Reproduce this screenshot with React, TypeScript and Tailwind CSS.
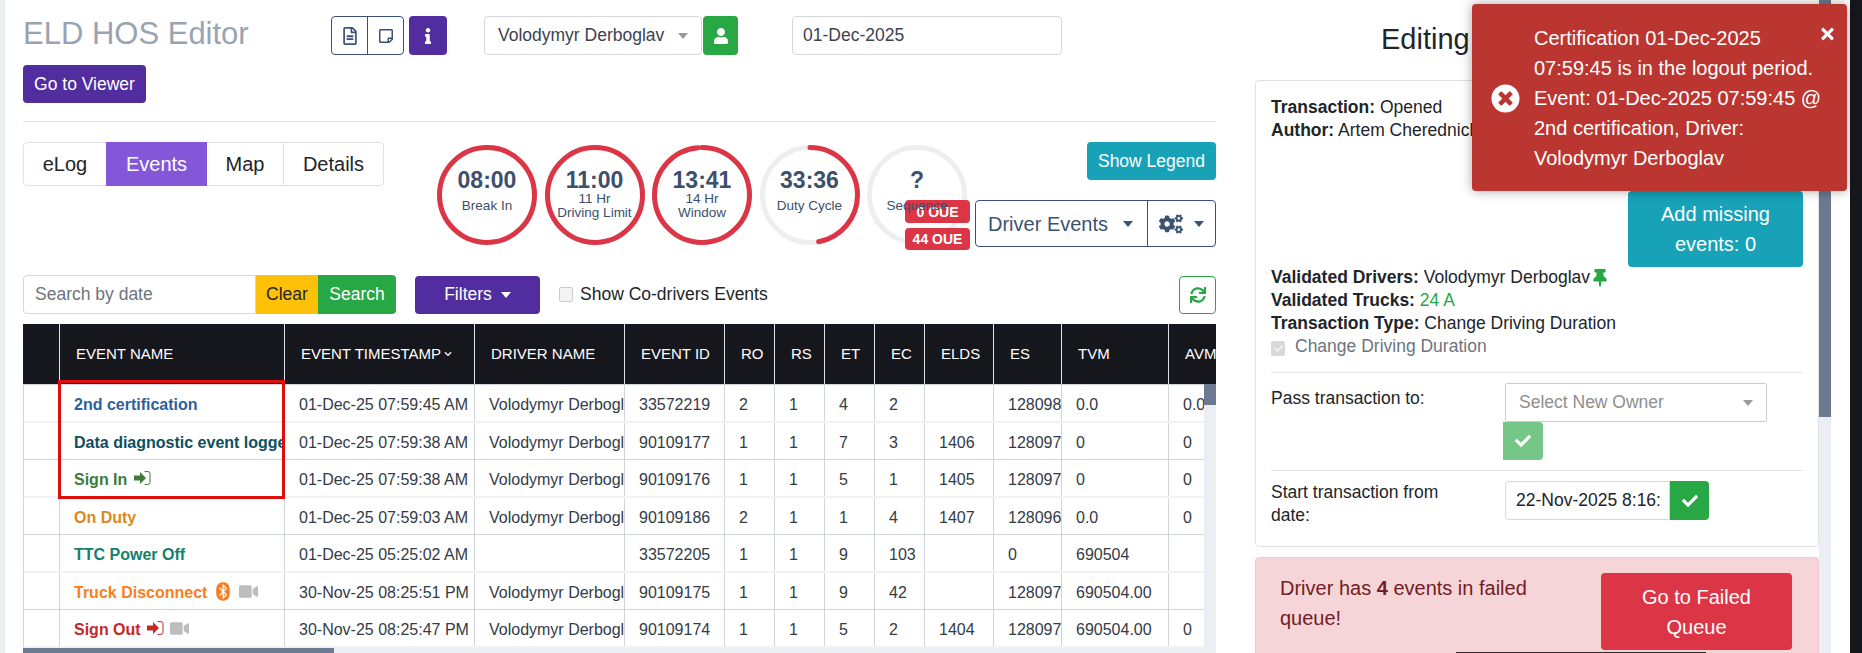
import React from "react";
import {
  FaRegFileAlt,
  FaRegStickyNote,
  FaInfo,
  FaUser,
  FaCogs,
  FaBluetooth,
  FaVideo,
  FaThumbtack,
  FaCheck,
  FaTimes,
  FaTimesCircle,
  FaSync,
  FaChevronDown,
} from "react-icons/fa";

const FONT = "font-['Liberation_Sans',Arial,sans-serif]";

/** Small solid caret used by the dropdown buttons */
const Caret: React.FC<{ className?: string }> = ({ className }) => (
  <span
    className={`inline-block w-0 h-0 border-x-[5.5px] border-x-transparent border-t-[6px] border-t-current ${className ?? ""}`}
  />
);

/** Arrow going into a thin bracket, same glyph for sign in and sign out */
const SignIcon: React.FC<{ className?: string }> = ({ className }) => (
  <svg viewBox="0 0 17 14" className={`w-[17px] h-[14px] -mt-[4px] ${className ?? ""}`}>
    <path d="M0 4.5H6V1L12 7L6 13V9.5H0Z" fill="currentColor" />
    <path d="M10.5 .6H14a2 2 0 0 1 2 2v8.8a2 2 0 0 1-2 2H10.5" fill="none" stroke="currentColor" strokeWidth="1" />
  </svg>
);

const Ring: React.FC<{
  value: string;
  lines: string[];
  pct: number;
}> = ({ value, lines, pct }) => {
  const r = 47.5;
  const c = 2 * Math.PI * r;
  return (
    <div className="relative w-[100px] h-[100px] shrink-0">
      <svg viewBox="0 0 100 100" className="absolute inset-0 w-full h-full -rotate-90">
        <circle cx="50" cy="50" r={r} fill="none" stroke="#eeeeee" strokeWidth="5" />
        {pct > 0 && (
          <circle
            cx="50"
            cy="50"
            r={r}
            fill="none"
            stroke="#dc3545"
            strokeWidth="5"
            strokeLinecap={pct === 100 ? "butt" : "round"}
            strokeDasharray={`${(c * pct) / 100} ${c}`}
          />
        )}
      </svg>
      {/* label stays above the OUE badges */}
      <div className="relative z-20 h-full pt-[24px] flex flex-col items-center text-[#3c4f6b]">
        <div className="h-[23px] text-[23px] leading-[23px] font-bold">{value}</div>
        <div className="h-[28px] flex flex-col justify-center items-center">
          {lines.map((l) => (
            <div key={l} className="text-[13.5px] leading-[14px] whitespace-nowrap">
              {l}
            </div>
          ))}
        </div>
      </div>
    </div>
  );
};

type Row = {
  name: React.ReactNode;
  ts: string;
  driver: string;
  id: string;
  ro: string;
  rs: string;
  et: string;
  ec: string;
  elds: string;
  es: string;
  tvm: string;
  avm: string;
};

const V = "Volodymyr Derboglav";

const rows: Row[] = [
  { name: <span className="text-[#2e6099]">2nd certification</span>, ts: "01-Dec-25 07:59:45 AM", driver: V, id: "33572219", ro: "2", rs: "1", et: "4", ec: "2", elds: "", es: "128098", tvm: "0.0", avm: "0.0" },
  { name: <span className="text-[#0d4f5f]">Data diagnostic event logged</span>, ts: "01-Dec-25 07:59:38 AM", driver: V, id: "90109177", ro: "1", rs: "1", et: "7", ec: "3", elds: "1406", es: "128097", tvm: "0", avm: "0" },
  {
    name: (
      <span className="text-[#3f7a3a] inline-flex items-center gap-[7px]">
        Sign In <SignIcon />
      </span>
    ),
    ts: "01-Dec-25 07:59:38 AM", driver: V, id: "90109176", ro: "1", rs: "1", et: "5", ec: "1", elds: "1405", es: "128097", tvm: "0", avm: "0",
  },
  { name: <span className="text-[#d98a1e]">On Duty</span>, ts: "01-Dec-25 07:59:03 AM", driver: V, id: "90109186", ro: "2", rs: "1", et: "1", ec: "4", elds: "1407", es: "128096", tvm: "0.0", avm: "0" },
  { name: <span className="text-[#14806a]">TTC Power Off</span>, ts: "01-Dec-25 05:25:02 AM", driver: "", id: "33572205", ro: "1", rs: "1", et: "9", ec: "103", elds: "", es: "0", tvm: "690504", avm: "" },
  {
    name: (
      <span className="text-[#fb7d1c] inline-flex items-center gap-[8px]">
        Truck Disconnect
        <FaBluetooth className="w-[16px] h-[19px] -mt-[3px]" />
        <FaVideo className="w-[19px] h-[17px] -mt-[3px] text-[#bdbdbd]" />
      </span>
    ),
    ts: "30-Nov-25 08:25:51 PM", driver: V, id: "90109175", ro: "1", rs: "1", et: "9", ec: "42", elds: "", es: "128097", tvm: "690504.00", avm: "",
  },
  {
    name: (
      <span className="text-[#c62828] inline-flex items-center gap-[6px]">
        Sign Out
        <SignIcon />
        <FaVideo className="w-[19px] h-[17px] -mt-[3px] text-[#bdbdbd]" />
      </span>
    ),
    ts: "30-Nov-25 08:25:47 PM", driver: V, id: "90109174", ro: "1", rs: "1", et: "5", ec: "2", elds: "1404", es: "128097", tvm: "690504.00", avm: "0",
  },
];

const headCols = [
  { label: "", w: "w-[37px]" },
  { label: "EVENT NAME", w: "w-[225px]" },
  { label: "EVENT TIMESTAMP", w: "w-[190px]", sort: true },
  { label: "DRIVER NAME", w: "w-[150px]" },
  { label: "EVENT ID", w: "w-[100px]" },
  { label: "RO", w: "w-[50px]" },
  { label: "RS", w: "w-[50px]" },
  { label: "ET", w: "w-[50px]" },
  { label: "EC", w: "w-[50px]" },
  { label: "ELDS", w: "w-[69px]" },
  { label: "ES", w: "w-[68px]" },
  { label: "TVM", w: "w-[107px]" },
  { label: "AVM", w: "flex-1" },
];

const EventsTable: React.FC = () => (
  <div className="relative">
    {/* Header */}
    <div className="flex h-[60px] bg-[#16161d] text-white text-[15px] overflow-hidden">
      {headCols.map((c, i) => (
        <div
          key={i}
          className={`${c.w} shrink-0 flex items-center pl-[16px] whitespace-nowrap border-r border-[#dee2e6] last:border-r-0 overflow-hidden`}
        >
          {c.label}
          {c.sort && <FaChevronDown className="w-[8px] h-[8px] ml-[3px]" />}
        </div>
      ))}
    </div>
    <div className="flex">
      <div className="w-[1181px] border-t border-[#d0d3d8]">
        {rows.map((r, i) => {
          const cells = [r.name, r.ts, r.driver, r.id, r.ro, r.rs, r.et, r.ec, r.elds, r.es, r.tvm, r.avm];
          return (
            <div
              key={i}
              className={`flex h-[37.5px] text-[16px] text-[#333b47] border-l border-[#d0d3d8] ${
                i % 2 === 0 ? "border-b-[2px] border-b-[#f1f2f4]" : "border-b border-b-[#cfd2d6]"
              }`}
            >
              <div className="w-[36px] shrink-0 border-r border-[#d0d3d8]" />
              {cells.map((c, j) => (
                <div
                  key={j}
                  className={`${headCols[j + 1].w} shrink-0 flex items-center pl-[14px] pt-[4px] whitespace-nowrap overflow-hidden border-r border-[#d0d3d8] last:border-r-0 ${
                    j === 0 ? "font-bold" : ""
                  }`}
                >
                  {c}
                </div>
              ))}
            </div>
          );
        })}
      </div>
      {/* vertical scrollbar */}
      <div className="w-[12px] bg-[#ebeef2]">
        <div className="h-[21px] bg-[#6b7a90]" />
      </div>
    </div>
    {/* horizontal scrollbar */}
    <div className="h-[6px] bg-[#ebeef2]">
      <div className="h-full w-[311px] bg-[#6b7a90]" />
    </div>
    {/* red highlight drawn over the first three rows */}
    <div className="absolute left-[35px] top-[56px] w-[227px] h-[119px] border-[3px] border-[#e00d0d] pointer-events-none" />
  </div>
);

export default function App() {
  return (
    <div className={`${FONT} relative flex h-[653px] w-[1862px] overflow-hidden bg-white`}>
      <div className="w-[5px] bg-[#ebeef3] shrink-0" />

      {/* Left pane */}
      <div className="w-[1211px] shrink-0 pl-[18px]">
        {/* Top bar */}
        <div className="flex items-start pt-[16px] h-[122px] border-b border-[#e3e5ea]">
          <div className="w-[308px] shrink-0">
            <h3 className="text-[31px] leading-[36px] text-[#9aa3b2] mb-[13px]">ELD HOS Editor</h3>
            <button className="w-[123px] h-[38px] rounded bg-[#522da0] text-white text-[17.5px]">Go to Viewer</button>
          </div>
          <div className="flex h-[39px] w-[73px] border border-[#3c5272] rounded text-[#3c5272]">
            <div className="flex-1 flex items-center justify-center border-r border-[#3c5272]">
              <FaRegFileAlt className="w-[16px] h-[18px]" />
            </div>
            <div className="flex-1 flex items-center justify-center">
              <FaRegStickyNote className="w-[16px] h-[16px]" />
            </div>
          </div>
          <div className="ml-[5px] w-[38px] h-[39px] rounded bg-[#522da0] text-white flex items-center justify-center">
            <FaInfo className="w-[8px] h-[16px]" />
          </div>
          <div className="ml-[37px] w-[218px] h-[39px] border border-[#d5d8dc] rounded flex items-center justify-between pl-[13px] pr-[13px] text-[17.5px] text-[#3b4350]">
            Volodymyr Derboglav
            <Caret className="text-[#9a9a9a]" />
          </div>
          <div className="ml-[1px] w-[35px] h-[39px] rounded bg-[#28a745] text-white flex items-center justify-center">
            <FaUser className="w-[16px] h-[16px]" />
          </div>
          <div className="ml-[54px] w-[270px] h-[39px] border border-[#d5d8dc] rounded flex items-center pl-[10px] text-[17.5px] text-[#3b4350]">
            01-Dec-2025
          </div>
        </div>

        {/* Tabs + rings */}
        <div className="flex h-[128px] relative pt-[20px]">
          <div className="flex h-[44px] w-[361px] border border-[#dfe1e5] rounded text-[20px] text-[#212529] shrink-0">
            <div className="w-[82px] flex items-center justify-center">eLog</div>
            <div className="w-[101px] flex items-center justify-center bg-[#8457d9] text-white -my-px">Events</div>
            <div className="w-[77px] flex items-center justify-center border-r border-[#dfe1e5]">Map</div>
            <div className="flex-1 flex items-center justify-center">Details</div>
          </div>
          <div className="ml-[53px] flex gap-[7.5px] mt-[3px] h-[101px]">
            <Ring value="08:00" lines={["Break In"]} pct={100} />
            <Ring value="11:00" lines={["11 Hr", "Driving Limit"]} pct={100} />
            <Ring value="13:41" lines={["14 Hr", "Window"]} pct={98.5} />
            <Ring value="33:36" lines={["Duty Cycle"]} pct={47} />
            <Ring value="?" lines={["Sequence"]} pct={0} />
          </div>
          {/* OUE badges sit over the last ring, under its label */}
          <div className="absolute z-10 left-[882px] top-[78px] w-[65px] flex flex-col gap-[5px] text-white text-[14px] font-bold">
            <div className="h-[23px] rounded bg-[#dc3545] flex items-center justify-center pt-[2px]">0 OUE</div>
            <div className="h-[22px] rounded bg-[#dc3545] flex items-center justify-center">44 OUE</div>
          </div>
          <div className="ml-auto flex flex-col items-end">
            <button className="w-[129px] h-[38px] rounded bg-[#17a2b8] text-white text-[17.5px]">Show Legend</button>
            <div className="mt-[20px] flex w-[241px] h-[47px] border border-[#3c5272] rounded text-[#3c5272]">
              <div className="w-[172px] flex items-center justify-between pl-[12px] pr-[14px] border-r border-[#3c5272] text-[20px]">
                Driver Events
                <Caret />
              </div>
              <div className="flex-1 flex items-center justify-between pl-[11px] pr-[11px]">
                <FaCogs className="w-[24px] h-[20px]" />
                <Caret />
              </div>
            </div>
          </div>
        </div>

        {/* Search row */}
        <div className="flex items-center h-[39px] mt-[25px]">
          <div className="w-[233px] h-[39px] border border-[#d5d8dc] rounded-l flex items-center pl-[11px] text-[17.5px] text-[#6c757d]">
            Search by date
          </div>
          <div className="w-[62px] h-[39px] bg-[#ffc107] flex items-center justify-center text-[17.5px] text-[#212529]">Clear</div>
          <div className="w-[78px] h-[39px] bg-[#28a745] rounded-r flex items-center justify-center text-[17.5px] text-white">Search</div>
          <button className="ml-[19px] w-[125px] h-[38px] rounded bg-[#522da0] text-white text-[17.5px] flex items-center justify-center gap-[9px]">
            Filters
            <Caret />
          </button>
          <span className="ml-[19px] w-[14px] h-[15px] border border-[#c8cbd0] rounded-[2px] bg-[#f4f4f4]" />
          <span className="ml-[7px] text-[17.5px] text-[#212529]">Show Co-drivers Events</span>
          <button className="ml-auto w-[37px] h-[38px] border border-[#28a745] rounded text-[#28a745] flex items-center justify-center">
            <FaSync className="w-[16px] h-[16px]" />
          </button>
        </div>

        <div className="mt-[10px]">
          <EventsTable />
        </div>
      </div>

      {/* Right pane */}
      <div className="flex-1 flex min-w-0 pl-[39px]">
        <div className="w-[564px] shrink-0">
          <h3 className="h-[80px] pt-[22px] text-[29px] leading-[34px] text-[#212529] pl-[126px] whitespace-nowrap overflow-hidden">
            Editing Transaction
          </h3>
          <div className="h-[467px] border border-[#dfe1e5] rounded px-[15px] pt-[15px] text-[17.5px] leading-[23px] text-[#212529]">
            <div><b>Transaction:</b> Opened</div>
            <div><b>Author:</b> Artem Cherednichenko</div>
            <div className="flex justify-end h-[124px] pt-[49px]">
              <button className="w-[175px] h-[76px] px-[12px] rounded bg-[#17a2b8] text-white text-[20px] leading-[30px]">
                Add missing events: 0
              </button>
            </div>
            <div className="flex items-center">
              <b>Validated Drivers:</b>&nbsp;Volodymyr Derboglav
              <FaThumbtack className="w-[14px] h-[18px] text-[#28a745] ml-[3px]" />
            </div>
            <div><b>Validated Trucks:</b> <span className="text-[#28a745]">24 A</span></div>
            <div><b>Transaction Type:</b> Change Driving Duration</div>
            <div className="flex items-center text-[#6c757d]">
              <span className="w-[14px] h-[15px] mt-[3px] rounded-[2px] bg-[#d9d9d9] flex items-center justify-center mr-[10px]">
                <FaCheck className="w-[9px] h-[9px] text-[#f4f4f4]" />
              </span>
              Change Driving Duration
            </div>
            <div className="mt-[14px] border-t border-[#e3e5ea] pt-[10px] flex h-[98px]">
              <div className="w-[234px] shrink-0 pt-[4px]">Pass transaction to:</div>
              <div>
                <div className="w-[262px] h-[39px] border border-[#ccc] rounded-[2px] flex items-center justify-between pl-[13px] pr-[13px] text-[#8f8f8f]">
                  Select New Owner
                  <Caret className="text-[#9a9a9a]" />
                </div>
                <div className="-ml-[2px] w-[40px] h-[38px] bg-[#75c687] rounded-r flex items-center justify-center text-white">
                  <FaCheck className="w-[16px] h-[16px]" />
                </div>
              </div>
            </div>
            <div className="border-t border-[#e3e5ea] pt-[10px] flex">
              <div className="w-[234px] shrink-0">Start transaction from<br />date:</div>
              <div className="flex">
                <div className="w-[165px] h-[39px] border border-[#d5d8dc] rounded-l flex items-center pl-[10px] overflow-hidden whitespace-nowrap">
                  22-Nov-2025 8:16:
                </div>
                <div className="w-[39px] h-[39px] bg-[#28a745] rounded-r flex items-center justify-center text-white">
                  <FaCheck className="w-[16px] h-[16px]" />
                </div>
              </div>
            </div>
          </div>
          <div className="mt-[10px] h-[120px] bg-[#f6d5d9] border border-[#f5c6cb] rounded pl-[24px] pt-[15px] flex text-[20px] leading-[30px] text-[#721c24]">
            <div className="w-[321px] shrink-0 pr-[50px]">Driver has <b>4</b> events in failed queue!</div>
            <button className="w-[191px] h-[77px] px-[12px] rounded bg-[#dc3545] text-white text-[20px] leading-[30px]">
              Go to Failed Queue
            </button>
          </div>
        </div>
        {/* page scrollbar */}
        <div className="w-[12px] shrink-0 bg-[#ebeef2]">
          <div className="h-[417px] bg-[#6b7a90]" />
        </div>
        <div className="w-[19px] shrink-0" />
        <div className="flex-1 bg-[#16161d]" />
      </div>

      {/* Sliver of the next element peeking in at the bottom */}
      <div className="absolute left-[1456px] top-[652px] w-[250px] h-[1px] bg-[#2a2a2e]" />

      {/* Error toast */}
      <div className="absolute z-30 left-[1472px] top-[4px] w-[375px] h-[187px] bg-[#bb3631] rounded shadow-[0_0_12px_rgba(0,0,0,0.35)] text-white text-[20px] leading-[30px] pl-[62px] pt-[19px] whitespace-nowrap">
        <FaTimesCircle className="absolute left-[19px] top-[80px] w-[29px] h-[29px]" />
        <FaTimes className="absolute right-[13px] top-[21px] w-[13px] h-[18px]" />
        Certification 01-Dec-2025
        <br />
        07:59:45 is in the logout period.
        <br />
        Event: 01-Dec-2025 07:59:45 @
        <br />
        2nd certification, Driver:
        <br />
        Volodymyr Derboglav
      </div>
    </div>
  );
}
